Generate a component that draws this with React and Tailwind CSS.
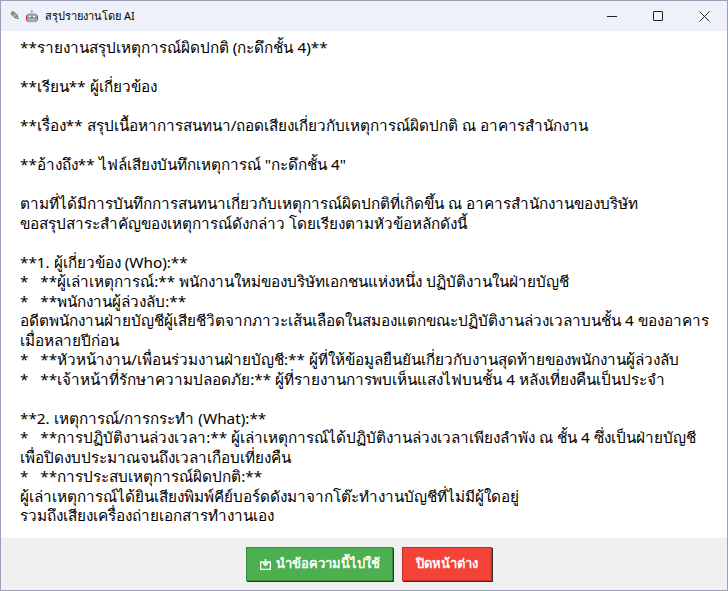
export default function App() {
  const lines = [
    "**รายงานสรุปเหตุการณ์ผิดปกติ (กะดึกชั้น 4)**",
    "",
    "**เรียน** ผู้เกี่ยวข้อง",
    "",
    "**เรื่อง** สรุปเนื้อหาการสนทนา/ถอดเสียงเกี่ยวกับเหตุการณ์ผิดปกติ ณ อาคารสำนักงาน",
    "",
    "**อ้างถึง** ไฟล์เสียงบันทึกเหตุการณ์ \"กะดึกชั้น 4\"",
    "",
    "ตามที่ได้มีการบันทึกการสนทนาเกี่ยวกับเหตุการณ์ผิดปกติที่เกิดขึ้น ณ อาคารสำนักงานของบริษัท",
    "ขอสรุปสาระสำคัญของเหตุการณ์ดังกล่าว โดยเรียงตามหัวข้อหลักดังนี้",
    "",
    "**1. ผู้เกี่ยวข้อง (Who):**",
    "*   **ผู้เล่าเหตุการณ์:** พนักงานใหม่ของบริษัทเอกชนแห่งหนึ่ง ปฏิบัติงานในฝ่ายบัญชี",
    "*   **พนักงานผู้ล่วงลับ:**",
    "อดีตพนักงานฝ่ายบัญชีผู้เสียชีวิตจากภาวะเส้นเลือดในสมองแตกขณะปฏิบัติงานล่วงเวลาบนชั้น 4 ของอาคาร",
    "เมื่อหลายปีก่อน",
    "*   **หัวหน้างาน/เพื่อนร่วมงานฝ่ายบัญชี:** ผู้ที่ให้ข้อมูลยืนยันเกี่ยวกับงานสุดท้ายของพนักงานผู้ล่วงลับ",
    "*   **เจ้าหน้าที่รักษาความปลอดภัย:** ผู้ที่รายงานการพบเห็นแสงไฟบนชั้น 4 หลังเที่ยงคืนเป็นประจำ",
    "",
    "**2. เหตุการณ์/การกระทำ (What):**",
    "*   **การปฏิบัติงานล่วงเวลา:** ผู้เล่าเหตุการณ์ได้ปฏิบัติงานล่วงเวลาเพียงลำพัง ณ ชั้น 4 ซึ่งเป็นฝ่ายบัญชี",
    "เพื่อปิดงบประมาณจนถึงเวลาเกือบเที่ยงคืน",
    "*   **การประสบเหตุการณ์ผิดปกติ:**",
    "ผู้เล่าเหตุการณ์ได้ยินเสียงพิมพ์คีย์บอร์ดดังมาจากโต๊ะทำงานบัญชีที่ไม่มีผู้ใดอยู่",
    "รวมถึงเสียงเครื่องถ่ายเอกสารทำงานเอง",
  ];
  return (
    <div className="w-[728px] h-[591px] flex flex-col bg-[#f0f0f0] border border-[#9aa0b5] overflow-hidden" style={{ fontFamily: "Tahoma, 'Noto Sans', 'DejaVu Sans', sans-serif" }}>
      <div className="h-[30px] bg-[#eef1f9] flex items-center shrink-0">
        <span className="ml-[9px] text-[12px] text-[#333]">✎</span>
        <span className="ml-[5px] text-[11px]">🤖</span>
        <span className="ml-[6px] text-[11px] text-black">สรุปรายงานโดย AI</span>
        <div className="ml-auto flex items-center h-full text-[#222]">
          <div className="w-[46px] flex justify-center"><div className="w-[10px] h-px bg-[#222]" /></div>
          <div className="w-[46px] flex justify-center"><div className="w-[10px] h-[10px] border border-[#222] rounded-[1px]" /></div>
          <div className="w-[46px] flex justify-center">
            <svg width="11" height="11" viewBox="0 0 11 11"><path d="M0.5 0.5L10.5 10.5M10.5 0.5L0.5 10.5" stroke="#222" strokeWidth="1" /></svg>
          </div>
        </div>
      </div>
      <div className="h-[507px] bg-white overflow-hidden pl-[19px] pt-[7px] shrink-0">
        {lines.map((l, i) => (
          <div key={i} className="whitespace-pre text-[15.3px] leading-[19.5px] text-black" style={{ fontFamily: "'Noto Sans', 'DejaVu Sans', sans-serif" }}>{l || "\u00a0"}</div>
        ))}
      </div>
      <div className="flex-1 flex justify-center items-start pt-[9px] gap-[9px] pl-[10px]">
        <button className="w-[147px] h-[34px] bg-[#4caf50] text-white text-[13px] font-bold flex items-center justify-center gap-[5px] border border-[#3a8a3d] shadow-[1px_1px_0_#333]">
          <svg width="11" height="11" viewBox="0 0 11 11"><rect x="0.5" y="3" width="10" height="7.5" fill="none" stroke="white" strokeWidth="1.5" /><path d="M5.5 0v6M3 4l2.5 2.5L8 4" stroke="white" strokeWidth="1.5" fill="none" /></svg>
          นำข้อความนี้ไปใช้
        </button>
        <button className="w-[90px] h-[34px] bg-[#f44336] text-white text-[13px] font-bold border border-[#c0302a] shadow-[1px_1px_0_#333]">ปิดหน้าต่าง</button>
      </div>
    </div>
  );
}
